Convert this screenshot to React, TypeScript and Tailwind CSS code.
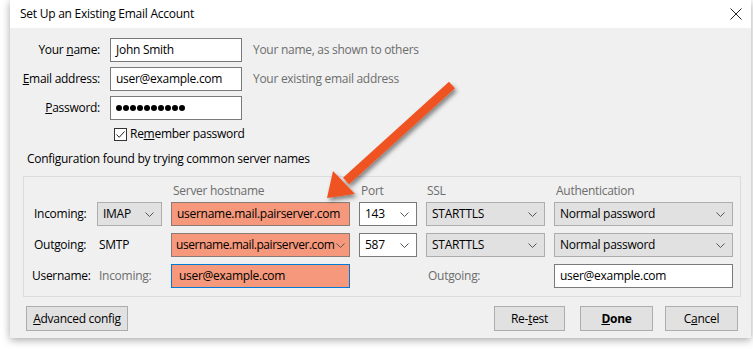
import React from "react";

const font = { fontFamily: '"Open Sans", "Noto Sans", sans-serif' };

function Chevron() {
  return (
    <svg width="9" height="5" viewBox="0 0 9 5" className="shrink-0">
      <path d="M0.5 0.5 L4.5 4.5 L8.5 0.5" fill="none" stroke="#555" strokeWidth="1" />
    </svg>
  );
}

function Select({ value, white }: { value: string; white?: boolean }) {
  return (
    <div
      className={`h-[24px] flex items-center justify-between pl-[5px] pr-[7px] border ${
        white ? "bg-white border-[#7a7a7a]" : "bg-[#e1e1e1] border-[#adadad]"
      }`}
    >
      <span>{value}</span>
      <Chevron />
    </div>
  );
}

function Input({ value, className }: { value: string; className: string }) {
  return (
    <div className={`h-[24px] flex items-center pl-[5px] border ${className}`}>
      <span className="whitespace-nowrap">{value}</span>
    </div>
  );
}

function Button({ children, className }: { children: React.ReactNode; className: string }) {
  return (
    <div className={`h-[25px] flex items-center justify-center bg-[#e1e1e1] border border-[#adadad] ${className}`}>
      {children}
    </div>
  );
}

export default function App() {
  return (
    <div
      className="w-[753px] h-[349px] bg-white relative overflow-hidden text-[12px] tracking-[-0.28px] text-black"
      style={font}
    >
      <div className="ml-[10px] w-[741px] h-[338px] flex flex-col shadow-[0_2px_8px_rgba(0,0,0,0.35)]">
        {/* title bar */}
        <div className="h-[28px] bg-white flex items-center justify-between pl-[10px] pr-[9px]">
          <span className="text-[12px] tracking-[-0.25px]">Set Up an Existing Email Account</span>
          <svg width="12" height="12" viewBox="0 0 12 12">
            <path d="M0.5 0.5 L11.5 11.5 M11.5 0.5 L0.5 11.5" stroke="#222" strokeWidth="1" />
          </svg>
        </div>

        <div className="flex-1 bg-[#f0f0f0] flex flex-col pt-[10px]">
          {/* identity rows */}
          <div className="flex flex-col gap-[5px]">
            <div className="flex items-center">
              <span className="w-[90px] text-right">Your <u>n</u>ame:</span>
              <Input value="John Smith" className="ml-[10px] w-[132px] bg-white border-[#7a7a7a]" />
              <span className="ml-[11px] text-[#6d6d6d]">Your name, as shown to others</span>
            </div>
            <div className="flex items-center">
              <span className="w-[90px] text-right"><u>E</u>mail address:</span>
              <Input value="user@example.com" className="ml-[10px] w-[132px] bg-white border-[#7a7a7a]" />
              <span className="ml-[11px] text-[#6d6d6d]">Your existing email address</span>
            </div>
            <div className="flex items-center">
              <span className="w-[90px] text-right"><u>P</u>assword:</span>
              <div className="ml-[10px] w-[132px] h-[24px] bg-white border border-[#7a7a7a] flex items-center pl-[5px] gap-[1px]">
                {Array.from({ length: 10 }).map((_, i) => (
                  <span key={i} className="w-[6px] h-[6px] rounded-full bg-black" />
                ))}
              </div>
            </div>
          </div>

          <div className="flex items-center ml-[104px] mt-[7px] h-[14px]">
            <div className="w-[13px] h-[13px] bg-white border border-[#333] flex items-center justify-center">
              <svg width="11" height="11" viewBox="0 0 11 11">
                <path d="M1.5 5.5 L4.2 8.3 L9.5 2.5" fill="none" stroke="#222" strokeWidth="1" />
              </svg>
            </div>
            <span className="ml-[3px]">Re<u>m</u>ember password</span>
          </div>

          <div className="ml-[17px] mt-[9px]">Configuration found by trying common server names</div>

          {/* server group */}
          <div className="ml-[13px] mt-[8px] w-[718px] h-[121px] border border-[#dcdcdc] pl-[10px] pt-[4px]">
            <div className="grid grid-cols-[54px_65px_179px_58px_119px_179px] gap-x-[9px] items-center">
              <div className="col-start-3 pl-[2px] text-[#6d6d6d] h-[19px] leading-[19px]">Server hostname</div>
              <div className="pl-[2px] text-[#6d6d6d]">Port</div>
              <div className="pl-[1px] text-[#6d6d6d]">SSL</div>
              <div className="pl-[2px] text-[#6d6d6d]">Authentication</div>
            </div>

            <div className="grid grid-cols-[54px_65px_179px_58px_119px_179px] gap-x-[9px] gap-y-[7px] items-center mt-[2px]">
              <span>Incoming:</span>
              <Select value="IMAP" />
              <Input value="username.mail.pairserver.com" className="bg-[#f5987b] border-[#8a7b76]" />
              <Select value="143" white />
              <Select value="STARTTLS" />
              <Select value="Normal password" />

              <span>Outgoing:</span>
              <span className="pl-[2px]">SMTP</span>
              <div className="h-[24px] flex items-center justify-between pl-[4px] pr-[4px] border bg-[#f5987b] border-[#8a7b76]">
                <span className="whitespace-nowrap tracking-[-0.45px]">username.mail.pairserver.com</span>
                <Chevron />
              </div>
              <Select value="587" white />
              <Select value="STARTTLS" />
              <Select value="Normal password" />

              <span className="-ml-[2px]">Username:</span>
              <span className="pl-[2px] text-[#6d6d6d]">Incoming:</span>
              <Input value="user@example.com" className="bg-[#f5987b] border-[#0078d7] pl-[7px]" />
              <span />
              <span className="pl-[2px] text-[#6d6d6d]">Outgoing:</span>
              <Input value="user@example.com" className="bg-white border-[#7a7a7a]" />
            </div>
          </div>

          {/* buttons */}
          <div className="flex items-center mt-[9px] pl-[16px] pr-[13px]">
            <Button className="w-[102px]"><span><u>A</u>dvanced config</span></Button>
            <div className="flex-1" />
            <Button className="w-[71px]"><span>Re-<u>t</u>est</span></Button>
            <Button className="w-[73px] ml-[15px] font-bold"><span><u>D</u>one</span></Button>
            <Button className="w-[73px] ml-[12px]"><span>C<u>a</u>ncel</span></Button>
          </div>
        </div>
      </div>

      {/* annotation arrow */}
      <svg className="absolute left-0 top-0" width="753" height="349" viewBox="0 0 753 349">
        <defs>
          <filter id="sh" x="-20%" y="-20%" width="140%" height="140%">
            <feDropShadow dx="2" dy="3" stdDeviation="2" floodColor="#000" floodOpacity="0.45" />
          </filter>
        </defs>
        <g filter="url(#sh)">
          <path d="M452 85 L346 181" stroke="#f05323" strokeWidth="9" strokeLinecap="butt" />
          <path d="M327 198 L333 171 L355 194 Z" fill="#f05323" />
        </g>
      </svg>
    </div>
  );
}
